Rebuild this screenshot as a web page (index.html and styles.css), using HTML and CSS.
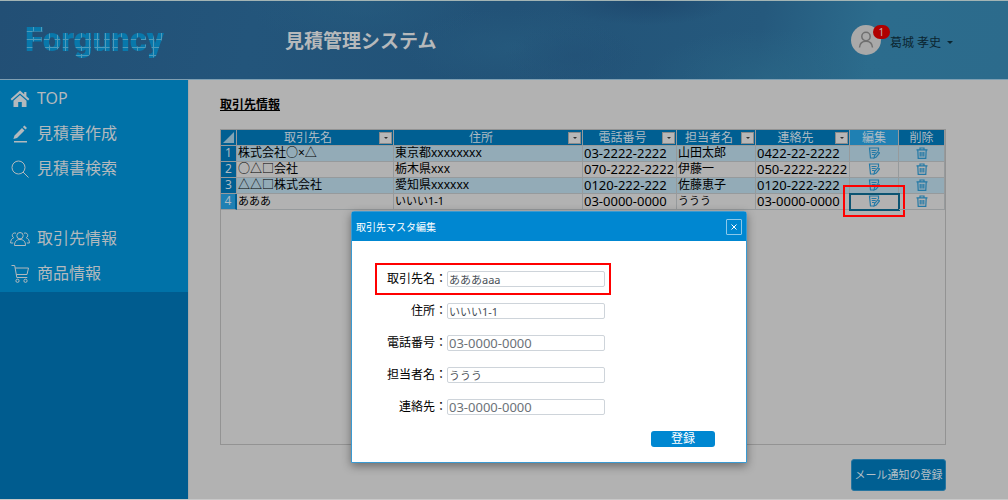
FILE: index.html
```html
<!DOCTYPE html>
<html lang="ja">
<head>
<meta charset="utf-8">
<title>見積管理システム</title>
<link rel="stylesheet" href="styles.css">
</head>
<body>
<svg class="defs" aria-hidden="true">
  <symbol id="edit" viewBox="0 0 12 12"><path d="M10.500 4V1H1.500L2.500 11H5.500M3.500 3.500h5M3.700 5.500h4M4 7.500h2.500M6.500 8.700l3.400-4 1.600 1.100-3.300 4.300-2.100.9z"/></symbol>
  <symbol id="trash" viewBox="0 0 12 12"><path d="M.5 2.900h11M4 2.700V1h4v1.700M1.800 3l.4 8.400h7.600l.4-8.400M4.200 5v4.500M6 5v4.500M7.800 5v4.500"/></symbol>
</svg>
<header class="header">
  <div class="logo">Forguncy</div>
  <h1 class="system-title">見積管理システム</h1>
  <div class="user">
    <div class="avatar">
      <svg width="16" height="18" viewBox="0 0 16 18"><circle cx="8" cy="5.500" r="4.200"/><path d="M1.500 16.500c.3-4.300 3-6.300 6.500-6.300s6.200 2 6.500 6.300"/></svg>
      <span class="badge">1</span>
    </div>
    <button class="user-name" type="button">葛城 孝史<span class="caret"></span></button>
  </div>
</header>
<div class="body">
  <nav class="sidebar">
    <ul class="menu">
      <li><a href="#"><svg viewBox="0 0 20 20"><path class="solid" d="M10 1.500L.6 10l1.300 1.500L10 4.400l8.100 7.100 1.300-1.500-3-2.700V3h-2.200v2.200zM10 6l-6.500 5.700V18h4.700v-5h3.600v5h4.700v-6.300z"/></svg>TOP</a></li>
      <li><a href="#"><svg viewBox="0 0 20 20"><path class="solid" d="M4.500 11.500L12 4l2.500 2.500L7 14l-3.600 1zM12.900 3.100l1.600-1.600 2.500 2.500-1.600 1.600zM4 17h13v1.500H4z"/></svg>見積書作成</a></li>
      <li><a href="#"><svg viewBox="0 0 20 20"><circle cx="8.500" cy="8.500" r="6.500"/><path d="M13 13l5.500 5.500"/></svg>見積書検索</a></li>
      <li class="blank"></li>
      <li><a href="#"><svg viewBox="0 0 20 20"><circle cx="10" cy="6.700" r="3.200"/><path d="M4.500 16.500c0-4 2-6 5.500-6s5.500 2 5.500 6zM6 4.200C3.500 3.300 2 5 2.300 6.800c.2 1 .8 1.600 1.400 2C1.500 9.500.6 11.500.6 14h2.600M14 4.200c2.500-.9 4 .8 3.700 2.600-.2 1-.8 1.600-1.400 2 2.200.7 3.100 2.700 3.100 5.200h-2.600"/></svg>取引先情報</a></li>
      <li><a href="#"><svg viewBox="0 0 20 20"><path d="M1.500 1.500h3.200L6.800 13.500h10.500M5.200 4h13.300L17 10.500H6.300"/><circle cx="7.500" cy="16.800" r="1.600"/><circle cx="15.500" cy="16.800" r="1.600"/></svg>商品情報</a></li>
    </ul>
  </nav>
  <main class="content">
    <h2 class="page-title">取引先情報</h2>
    <div class="grid">
      <table>
        <colgroup><col class="c-no"><col class="c-name"><col><col class="c-tel"><col class="c-person"><col class="c-tel"><col class="c-edit"><col class="c-del"></colgroup>
        <thead>
          <tr>
            <th><svg class="corner" viewBox="0 0 15 15"><path d="M13 2v11H2z"/></svg></th>
            <th><div class="head"><span>取引先名</span><button class="filter" type="button" aria-label="取引先名の絞り込み"></button></div></th>
            <th><div class="head"><span>住所</span><button class="filter" type="button" aria-label="住所の絞り込み"></button></div></th>
            <th><div class="head"><span>電話番号</span><button class="filter" type="button" aria-label="電話番号の絞り込み"></button></div></th>
            <th><div class="head"><span>担当者名</span><button class="filter" type="button" aria-label="担当者名の絞り込み"></button></div></th>
            <th><div class="head"><span>連絡先</span><button class="filter" type="button" aria-label="連絡先の絞り込み"></button></div></th>
            <th class="active">編集</th>
            <th>削除</th>
          </tr>
        </thead>
        <tbody>
          <tr><th>1</th><td>株式会社○×△</td><td>東京都xxxxxxxx</td><td class="num">03-2222-2222</td><td>山田太郎</td><td class="num">0422-22-2222</td><td class="act"><button type="button" aria-label="編集"><svg><use href="#edit"/></svg></button></td><td class="act"><button type="button" aria-label="削除"><svg><use href="#trash"/></svg></button></td></tr>
          <tr><th>2</th><td>○△□会社</td><td>栃木県xxx</td><td class="num">070-2222-2222</td><td>伊藤一</td><td class="num">050-2222-2222</td><td class="act"><button type="button" aria-label="編集"><svg><use href="#edit"/></svg></button></td><td class="act"><button type="button" aria-label="削除"><svg><use href="#trash"/></svg></button></td></tr>
          <tr><th>3</th><td>△△□株式会社</td><td>愛知県xxxxxx</td><td class="num">0120-222-222</td><td>佐藤恵子</td><td class="num">0120-222-222</td><td class="act"><button type="button" aria-label="編集"><svg><use href="#edit"/></svg></button></td><td class="act"><button type="button" aria-label="削除"><svg><use href="#trash"/></svg></button></td></tr>
          <tr><th class="current">4</th><td class="kana">あああ</td><td class="kana">いいい1-1</td><td class="num">03-0000-0000</td><td class="kana">ううう</td><td class="num">03-0000-0000</td><td class="act selected"><button type="button" aria-label="編集"><svg><use href="#edit"/></svg></button></td><td class="act"><button type="button" aria-label="削除"><svg><use href="#trash"/></svg></button></td></tr>
        </tbody>
      </table>
    </div>
    <button class="notify" type="button">メール通知の登録</button>
  </main>
</div>
<section class="dialog" role="dialog" aria-labelledby="dialog-title">
  <div class="dialog-head">
    <h2 id="dialog-title">取引先マスタ編集</h2>
    <button class="close" type="button" aria-label="閉じる"><svg width="6" height="6" viewBox="0 0 6 6"><path d="M.5.500l5 5M5.500.500l-5 5"/></svg></button>
  </div>
  <form class="form">
    <div class="field marked"><label for="f1">取引先名：</label><input id="f1" class="kana" type="text" value="あああaaa"></div>
    <div class="field"><label for="f2">住所：</label><input id="f2" class="kana" type="text" value="いいい1-1"></div>
    <div class="field"><label for="f3">電話番号：</label><input id="f3" type="text" value="03-0000-0000"></div>
    <div class="field"><label for="f4">担当者名：</label><input id="f4" class="kana" type="text" value="ううう"></div>
    <div class="field"><label for="f5">連絡先：</label><input id="f5" type="text" value="03-0000-0000"></div>
    <button class="submit" type="button">登録</button>
  </form>
</section>
</body>
</html>
```
FILE: styles.css
```css
*, *::after { box-sizing: border-box; }
body {
  margin: 0;
  min-height: 100vh;
  display: flex;
  flex-direction: column;
  background: #b2b2b2;
  border-bottom: 1px solid #c8c8c8;
  color: #000;
  font: 12px/16px "Noto Sans", "Noto Sans CJK JP", sans-serif;
}
button, input { font: inherit; color: inherit; margin: 0; padding: 0; border: 0; background: none; }
h1, h2, ul { margin: 0; padding: 0; }
a { color: inherit; text-decoration: none; }
svg { fill: none; stroke: currentColor; }
.defs { position: absolute; width: 0; height: 0; }

.header {
  height: 80px;
  display: flex;
  align-items: center;
  padding: 0 55px 0 25px;
  border-top: 1px solid #a3b4b4;
  border-bottom: 1px solid #7f9fb2;
  background:
    radial-gradient(ellipse 90px 24px at 64% 0, #1d466ccc, #1d466c00),
    radial-gradient(ellipse 70px 30px at 57% 70%, #22507699, #22507600),
    radial-gradient(ellipse 110px 40px at 51% 60%, #275d8099, #275d8000),
    radial-gradient(ellipse 120px 50px at 36% 0, #265c7f99, #265c7f00),
    radial-gradient(ellipse 120px 50px at 76% 100%, #2b698899, #2b698800),
    linear-gradient(100deg, #224f75 0, #23557b 25%, #225277 50%, #25597d 75%, #2c6c8d 86%, #2c6b8c 100%);
}
.logo {
  width: 260px;
  font: 900 33px/48px "Roboto", sans-serif;
  color: transparent;
  background:
    repeating-linear-gradient(0deg, #4f9aba 0 1px, transparent 1px 8px),
    repeating-linear-gradient(90deg, #4f9aba 0 1px, transparent 1px 8px),
    #0878ab;
  -webkit-background-clip: text;
  background-clip: text;
}
.system-title { flex: 1; padding-top: 2px; color: #b6b9bb; font-size: 19px; line-height: 28px; font-weight: 700; }
.user { display: flex; align-items: center; gap: 9px; }
.avatar {
  position: relative;
  width: 30px;
  height: 30px;
  border-radius: 50%;
  display: grid;
  place-items: center;
  background: #a9a9a9;
  color: #707070;
}
.avatar svg { stroke-width: 1.5; }
.badge {
  position: absolute;
  top: 0;
  right: -9px;
  width: 17px;
  height: 14px;
  border-radius: 7px;
  background: #b00000;
  color: #c8b0b0;
  font-size: 10px;
  line-height: 14px;
  text-align: center;
}
.user-name { display: flex; align-items: center; gap: 6px; margin-top: 5px; color: #0b2530; }
.caret { border: 3px solid transparent; border-top-color: #0b2530; border-bottom: 0; }

.body { flex: 1; display: flex; }
.sidebar { width: 188px; background: #005c8f; }
.menu { list-style: none; padding: 1px 0; background: #0072a8; color: #b3b9bd; font-size: 16px; line-height: 35px; }
.menu li { height: 35px; }
.menu a { display: flex; align-items: center; gap: 7px; padding-left: 10px; }
.menu svg { width: 20px; height: 20px; }
.menu .solid { fill: currentColor; stroke: none; }

.content { flex: 1; display: flex; flex-direction: column; padding: 16px 62px 8px 31px; border-left: 1px solid #a6a9ab; }
.page-title { font-size: 12px; line-height: 18px; text-decoration: underline; }
.grid { flex: 1; margin: 15px 0 14px; border: 1px solid #939393; }
table { width: 100%; table-layout: fixed; border-collapse: separate; border-spacing: 0; }
.c-no { width: 16px; }
.c-name { width: 157px; }
.c-tel { width: 94px; }
.c-person { width: 79px; }
.c-edit { width: 49px; }
.c-del { width: 46px; }
th, td { height: 16px; padding: 0; border: solid #969a9c; border-width: 0 1px 1px 0; line-height: 15px; white-space: nowrap; }
th { background: #005f92; color: #aebbc3; font-weight: 400; text-align: center; }
.corner { display: block; width: 15px; height: 15px; fill: #82a4b5; stroke: none; }
.active, .current { background: #1f80b3; }
.current { border-right: 2px solid #005f92; }
.head { display: flex; align-items: center; padding-right: 1px; }
.head span { flex: 1; }
.filter { width: 13px; height: 12px; display: grid; place-items: center; background: #b7b7b7; border: 1px solid #8b8b8b; }
.filter::before { content: ""; border: 2px solid transparent; border-top-color: #333; border-bottom: 0; }
tbody th, td { line-height: 14px; vertical-align: top; }
td { padding-left: 1px; }
tbody tr:nth-child(odd) td { background: #93abb7; }
.num { font-size: 13px; }
td.kana { font-size: 11px; }
td.act { position: relative; padding: 0; color: #2379a6; }
.act button { display: grid; place-items: center; width: 100%; height: 14px; }
.act svg { width: 12px; height: 12px; stroke-width: 1.2; }
.selected { outline: 2px solid #0b5472; outline-offset: -1px; }
.selected::after { content: ""; position: absolute; inset: -9px -7px -8px; border: 2px solid #f00; pointer-events: none; }
.notify { align-self: flex-end; width: 95px; height: 32px; border-radius: 3px; background: #005f92; border: 1px solid #2775a0; color: #b3bfc6; font-size: 11px; }

.dialog {
  position: absolute;
  top: 211px;
  left: 351px;
  width: 396px;
  background: #fff;
  border: 1px solid #3a9ad2;
  border-radius: 3px 3px 0 0;
  box-shadow: 0 3px 10px #0006;
}
.dialog-head { height: 29px; display: flex; align-items: center; justify-content: space-between; padding: 0 4px; background: #0087d1; color: #fff; }
.dialog-head h2 { font-size: 10px; font-weight: 400; }
.close { width: 16px; height: 16px; display: grid; place-items: center; border: 1px solid #8bc8ea; border-radius: 1px; }
.form { display: flex; flex-direction: column; gap: 16px; padding: 30px 31px 15px; }
.field { position: relative; display: flex; align-items: center; height: 16px; }
.field label { width: 64px; text-align: right; white-space: nowrap; }
.field input { width: 158px; height: 16px; padding: 0 1px; border: 1px solid #ced4da; border-radius: 2px; color: #6c7278; font-size: 13px; line-height: 14px; }
.field input.kana { font-size: 11px; color: #495057; }
.marked::after { content: ""; position: absolute; inset: -8px auto -8px -8px; width: 236px; border: 2px solid #f00; pointer-events: none; }
.submit { align-self: flex-end; width: 64px; height: 16px; border-radius: 3px; background: #0087d1; color: #fff; }
```
